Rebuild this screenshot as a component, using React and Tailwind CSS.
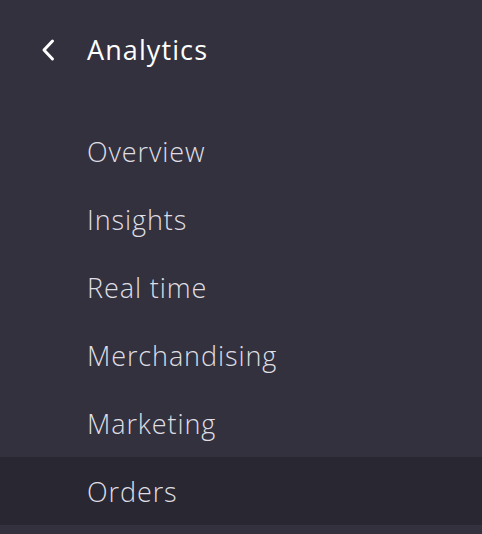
export default function App() {
  const items = ["Overview", "Insights", "Real time", "Merchandising", "Marketing", "Orders"];
  return (
    <div className="w-[482px] h-[534px] bg-[#33313e] overflow-hidden" style={{ fontFamily: '"Open Sans", sans-serif' }}>
      <div className="h-[117px] flex items-start pt-[32px]">
        <div className="flex items-center h-[36px]">
          <svg width="20" height="24" viewBox="0 0 20 24" className="ml-[38px]">
            <path d="M14.5 3 L6 12 L14.5 21" fill="none" stroke="#ffffff" strokeWidth="3" strokeLinecap="round" strokeLinejoin="round" />
          </svg>
          <span className="ml-[29px] text-[27px] font-medium text-white tracking-[1.1px]">Analytics</span>
        </div>
      </div>
      <div className="flex flex-col">
        {items.map((it) => (
          <div key={it} className={"h-[68px] flex items-center pl-[87px] pt-[2px] " + (it === "Orders" ? "bg-[#292731]" : "")}>
            <span className="text-[27px] font-light text-[#dfdee3] tracking-[0.9px]">{it}</span>
          </div>
        ))}
      </div>
    </div>
  );
}
